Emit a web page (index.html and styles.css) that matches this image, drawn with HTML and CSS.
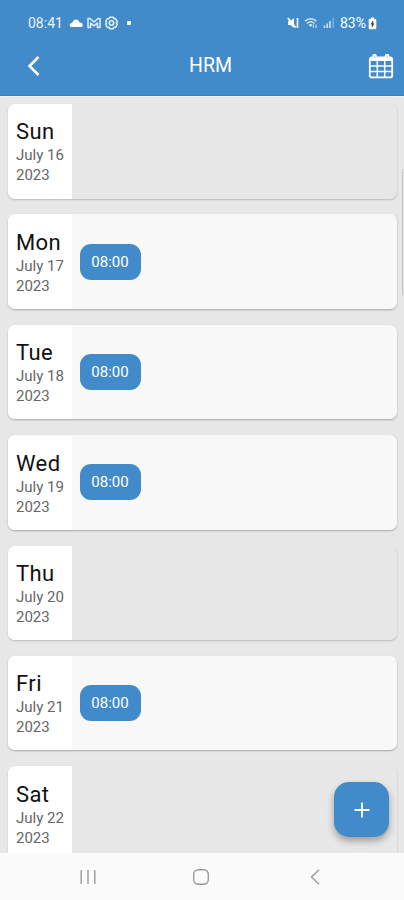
FILE: index.html
```
<!DOCTYPE html>
<html lang="en">
<head>
    <meta charset="UTF-8" />
    <title>HRM</title>
    <link rel="stylesheet" href="styles.css">
</head>
<body>
    <div class="phone">
        <div class="header">
            <div class="status">
                <span class="time">08:41</span>
                <svg class="cloud" width="14" height="8" viewBox="0 0 14 8"><path d="M2 8a2 2 0 0 1 0-3.800c.6-.2 1-.1 1.300-.4C4 1.500 5.200.4 7 .4s3 1.200 3.500 3c2-.1 3.200 1 3.200 2.500C13.700 7.200 13 8 12 8z" fill="#fff"/></svg>
                <svg class="mail" width="14" height="12" viewBox="0 0 14 12"><path d="M1 10.500v-9h2L7 5l4-3.500h2v9h-2.600V6L7 8.800 3.600 6v4.500z" fill="none" stroke="#e3effa" stroke-width="1.500" stroke-linejoin="round"/></svg>
                <svg class="gear" width="13" height="14" viewBox="0 0 13 14"><path d="M4.800 1.200h3.400l.8 1.500 1.800.1 1.500 2.700-.9 1.500.9 1.500-1.500 2.700-1.800.1-.8 1.500H4.800L4 11.300l-1.800-.1L.7 8.500 1.600 7 .7 5.500l1.500-2.700L4 2.700z" fill="none" stroke="#e3effa" stroke-width="1.500" stroke-linejoin="round"/><circle cx="6.500" cy="7" r="2.200" fill="none" stroke="#e3effa" stroke-width="1.600"/></svg>
                <i class="dot"></i>
                <div class="state">
                    <svg width="12" height="12" viewBox="0 0 12 12"><path d="M1 4h2.300L7 1v10L3.300 8H1z" fill="#fff"/><path d="M.8 1l8 9.500M10.500 1v10" stroke="#fff" stroke-width="1.600"/></svg>
                    <svg width="14" height="12" viewBox="0 0 14 12"><path d="M1 4.300C4.300 1 9.200 1 12.500 4.300M3 6.500c2.200-2 5.300-2 7.500 0" fill="none" stroke="#d6e6f5" stroke-width="1.500"/><path d="M4.500 7.800c1.500-1.200 3-1.200 4.200 0L6.700 10z" fill="#d6e6f5"/><path d="M9.500 7.500v3.500M12 7.500v3.500" stroke="#b9d5ed" stroke-width="1.200"/></svg>
                    <svg width="12" height="12" viewBox="0 0 12 12"><path d="M1.500 11V8.500M4.200 11V6.500M6.900 11V4" stroke="#c5dcf0" stroke-width="1.700"/><path d="M10.200 11V1" stroke="#7db1dd" stroke-width="1.500"/></svg>
                    <span class="percent">83%</span>
                    <svg class="battery" width="9" height="13" viewBox="0 0 9 13"><path d="M3 .5h3v1.200h1a1.300 1.300 0 0 1 1.300 1.300v8A1.300 1.300 0 0 1 7 12.300H2A1.300 1.300 0 0 1 .7 11V3A1.300 1.300 0 0 1 2 1.700h1z" fill="#fff"/><path d="M5 4L3 7.200h1.300L4 10l2-3.300H4.700z" fill="#333" stroke="#333" stroke-width=".5"/></svg>
                </div>
            </div>
            <div class="bar">
                <svg class="back" width="14" height="20" viewBox="0 0 14 20"><path d="M11.500 1L2.500 10l9 9" fill="none" stroke="#fff" stroke-width="2.500"/></svg>
                <h1 class="title">HRM</h1>
                <svg class="calendar" width="26" height="26" viewBox="0 0 26 26">
                    <rect x="1.800" y="4.400" width="22.400" height="20" rx="2" fill="none" stroke="#fff" stroke-width="1.800"/>
                    <path d="M1.500 5h23v3h-23zM4.300 2.500a1.500 1.500 0 0 1 1.500-1.500h1.400a1.500 1.500 0 0 1 1.500 1.500V6H4.300zM16.800 2.500a1.500 1.500 0 0 1 1.500-1.500h1.400a1.500 1.500 0 0 1 1.500 1.500V6h-4.400z" fill="#fff"/>
                    <path d="M2 13h22M2 18.600h22M9.300 7v17M16.700 7v17" stroke="#fff" stroke-width="1.500"/>
                    <path d="M6.500 2.800v2.200M19 2.800v2.200" stroke="#a9cbe8" stroke-width="1"/>
                </svg>
            </div>
        </div>

        <div class="list">
            <div class="card off">
                <div class="date"><h2>Sun</h2><p>July 16</p><p>2023</p></div>
            </div>
            <div class="card">
                <div class="date"><h2>Mon</h2><p>July 17</p><p>2023</p></div>
                <div class="shift">08:00</div>
            </div>
            <div class="card">
                <div class="date"><h2>Tue</h2><p>July 18</p><p>2023</p></div>
                <div class="shift">08:00</div>
            </div>
            <div class="card">
                <div class="date"><h2>Wed</h2><p>July 19</p><p>2023</p></div>
                <div class="shift">08:00</div>
            </div>
            <div class="card off">
                <div class="date"><h2>Thu</h2><p>July 20</p><p>2023</p></div>
            </div>
            <div class="card">
                <div class="date"><h2>Fri</h2><p>July 21</p><p>2023</p></div>
                <div class="shift">08:00</div>
            </div>
            <div class="card off">
                <div class="date"><h2>Sat</h2><p>July 22</p><p>2023</p></div>
            </div>
            <div class="handle"></div>
            <div class="add">
                <svg width="16" height="16" viewBox="0 0 16 16"><path d="M8 .5v15M.5 8h15" stroke="#fff" stroke-width="1.800"/></svg>
            </div>
        </div>

        <div class="nav">
            <svg width="16" height="16" viewBox="0 0 16 16"><path d="M1.200 1v14M8 1v14M14.800 1v14" stroke="#999" stroke-width="1.400"/></svg>
            <svg class="home" width="18" height="18" viewBox="0 0 18 18"><rect x="1.700" y="1.700" width="14.600" height="14.600" rx="4.500" fill="none" stroke="#999" stroke-width="1.400"/></svg>
            <svg width="10" height="16" viewBox="0 0 10 16"><path d="M9 .7L1.500 8 9 15.300" fill="none" stroke="#999" stroke-width="1.400"/></svg>
        </div>
    </div>
</body>
</html>
```
FILE: styles.css
```
*{
    margin:0;
    padding:0;
    box-sizing:border-box;
}
body{
    font-family:Roboto,"Liberation Sans",sans-serif;
    background:#e7e7e7;
}
svg{
    display:block;
    flex:none;
}
.phone{
    width:404px;
    height:900px;
    display:flex;
    flex-direction:column;
    overflow:hidden;
}
.header{
    height:96px;
    flex:none;
    background:#428bca;
    border-bottom:1px solid #3a80bf;
    color:#fff;
}
.status{
    height:46px;
    padding:0 27px 0 28px;
    display:flex;
    align-items:center;
    font-size:14px;
}
.time{
    width:36px;
    color:#eaf3fb;
}
.cloud{
    margin-left:5px;
}
.mail{
    margin-left:4px;
}
.gear{
    margin-left:4px;
}
.dot{
    width:4px;
    height:4px;
    margin-left:9px;
    background:#fff;
    border-radius:1px;
}
.state{
    margin-left:auto;
    display:flex;
    align-items:center;
    gap:5px;
}
.percent{
    width:26px;
}
.battery{
    margin-left:-3px;
}
.bar{
    height:39px;
    padding:0 10px 0 27px;
    display:flex;
    align-items:center;
    justify-content:space-between;
}
.title{
    font-size:19.500px;
    font-weight:400;
    margin-left:12px;
}
.list{
    flex:1;
    min-height:0;
    padding:7px 7px 0 8px;
    display:flex;
    flex-direction:column;
    gap:15.900px;
    position:relative;
    overflow:hidden;
    border-top:1px solid #f1f1f1;
}
.card{
    height:94.500px;
    flex:none;
    display:flex;
    align-items:center;
    background:#f8f8f8;
    border-radius:7px;
    box-shadow:0 1px 2px rgba(0,0,0,.28);
    overflow:hidden;
}
.off{
    background:#e7e7e7;
    box-shadow:0 1px 2px rgba(0,0,0,.2);
}
.date{
    width:64px;
    height:100%;
    padding:14.400px 0 0 8px;
    background:#fff;
    color:#666;
    white-space:nowrap;
}
.date h2{
    font-size:22px;
    line-height:27px;
    font-weight:400;
    letter-spacing:.4px;
    color:#111;
}
.date p{
    font-size:15px;
    line-height:20px;
}
.shift{
    width:61px;
    height:36px;
    margin-left:7.500px;
    background:#428bca;
    border-radius:11px;
    color:#fff;
    font-size:15px;
    line-height:37px;
    text-align:center;
}
.handle{
    position:absolute;
    right:-6px;
    top:71px;
    width:8px;
    height:129px;
    border:1px solid #c6c6c6;
    border-radius:4px;
    background:#e2e2e2;
}
.add{
    position:absolute;
    right:15px;
    bottom:16px;
    width:55px;
    height:55px;
    display:flex;
    align-items:center;
    justify-content:center;
    background:#428bca;
    border-radius:15px;
    box-shadow:0 4px 7px rgba(0,0,0,.32);
}
.nav{
    height:47px;
    flex:none;
    padding:1px 84px 0 80px;
    display:flex;
    align-items:center;
    justify-content:space-between;
    background:#fbfbfb;
}
.home{
    margin-right:4px;
}
```
